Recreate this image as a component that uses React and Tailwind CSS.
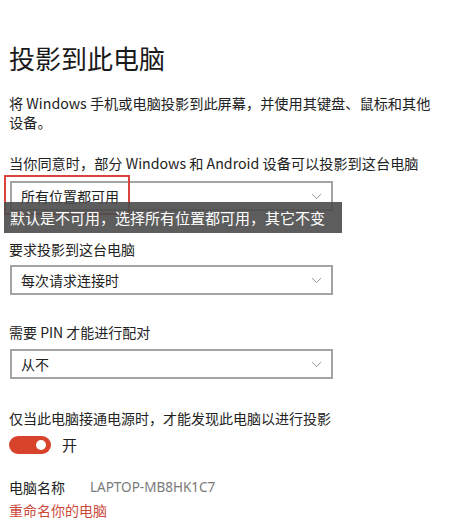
import { ChevronDown } from 'lucide-react';

const font = { fontFamily: '"Noto Sans CJK SC", "Noto Sans", sans-serif' };

const Select = ({ value, children, className = '' }) => (
  <div className={`relative ml-[1px] w-[323px] h-[30px] border-2 border-[#a3a3a3] bg-white flex items-center justify-between pl-[9px] pr-[6px] ${className}`}>
    <span className="text-[14px] leading-[20px] text-[#222]">{value}</span>
    <ChevronDown size={17} strokeWidth={1.1} className="text-[#777]" />
    {children}
  </div>
);

const ProjectSettings = () => {
  return (
    <div className="w-[450px] h-[531px] bg-white overflow-hidden pl-[9px] pt-[42px] text-[#222]" style={font}>
      <h1 className="text-[26px] leading-[32px] font-normal text-[#1a1a1a]">投影到此电脑</h1>

      <p className="mt-[20px] w-[432px] text-[14.2px] leading-[19px]">
        将 Windows 手机或电脑投影到此屏幕，并使用其键盘、鼠标和其他设备。
      </p>

      <p className="mt-[21px] text-[14.2px] leading-[20px] whitespace-nowrap">
        当你同意时，部分 Windows 和 Android 设备可以投影到这台电脑
      </p>
      <Select value="所有位置都可用" className="mt-[8px]">
        <div className="absolute left-[-8px] top-[-8px] w-[126px] h-[40px] border-2 border-[#d9453c]" />
        <div className="absolute left-[-8px] top-[19px] w-[338px] h-[31px] bg-[#4b4b4b]/90 flex items-center pl-[6px]">
          <span className="text-[15px] leading-[20px] text-white whitespace-nowrap">默认是不可用，选择所有位置都可用，其它不变</span>
        </div>
      </Select>

      <p className="mt-[28px] text-[14px] leading-[20px]">要求投影到这台电脑</p>
      <Select value="每次请求连接时" className="mt-[6px]" />

      <p className="mt-[27px] text-[14px] leading-[20px]">需要 PIN 才能进行配对</p>
      <Select value="从不" className="mt-[7px]" />

      <p className="mt-[29px] text-[14px] leading-[20px]">仅当此电脑接通电源时，才能发现此电脑以进行投影</p>
      <div className="mt-[7px] flex items-center">
        <div className="w-[42px] h-[18px] rounded-full bg-[#d8432b] flex items-center justify-end pr-[5px]">
          <div className="w-[10px] h-[10px] rounded-full bg-white" />
        </div>
        <span className="ml-[11px] text-[15px] leading-[20px]">开</span>
      </div>

      <div className="mt-[22px] flex items-center">
        <span className="text-[14px] leading-[20px] w-[81px]">电脑名称</span>
        <span className="text-[13.5px] leading-[20px] text-[#7a7a7a]" style={{ fontFamily: '"Noto Sans", sans-serif' }}>LAPTOP-MB8HK1C7</span>
      </div>
      <p className="mt-[3px] text-[14px] leading-[20px] text-[#cc4a3c]">重命名你的电脑</p>
    </div>
  );
};

export default function App() {
  return <ProjectSettings />;
}
